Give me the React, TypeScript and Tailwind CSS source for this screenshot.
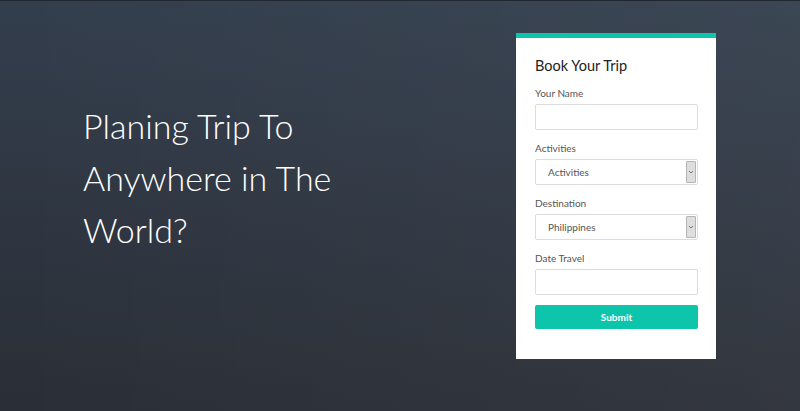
import React from "react";

const fields = [
  { label: "Your Name", type: "text" },
  { label: "Activities", type: "select", value: "Activities" },
  { label: "Destination", type: "select", value: "Philippines" },
  { label: "Date Travel", type: "text" },
];

const SelectBox: React.FC<{ value: string }> = ({ value }) => (
  <div className="flex h-[26px] items-stretch rounded-[2px] border border-[#dcdcdc] bg-white">
    <span className="flex flex-1 items-center pl-3 text-[10px] text-[#555]">{value}</span>
    <span className="m-[1px] flex w-[10px] items-center justify-center rounded-[1px] border border-[#b5b5b5] bg-[#dedede]">
      <svg width="6" height="4" viewBox="0 0 6 4">
        <path d="M1 1l2 2 2-2" fill="none" stroke="#777" strokeWidth="1" />
      </svg>
    </span>
  </div>
);

export default function App() {
  return (
    <div className="flex h-[411px] w-[800px] items-start justify-between border-t border-[#202731] bg-[linear-gradient(to_right,rgba(255,255,255,0)_0%,rgba(255,255,255,0.045)_100%),linear-gradient(to_bottom,#333e4d,#2a2e36)] pl-[83px] pr-[84px] font-['Lato','Liberation_Sans',sans-serif]">
      <h1 className="mt-[99px] text-[34px] font-light leading-[52px] text-white">
        Planing Trip To
        <br />
        Anywhere in The
        <br />
        World?
      </h1>

      <div className="mt-[32px] w-[200px] border-t-[5px] border-[#0cc5ab] bg-white pb-[30px] pl-[19px] pr-[18px] pt-[18px]">
        <h2 className="mb-[10px] text-[14.5px] leading-[20px] text-[#222]">Book Your Trip</h2>
        {fields.map((f) => (
          <div key={f.label} className="mb-[11px]">
            <div className="mb-[4px] text-[10px] leading-[14px] text-[#555]">{f.label}</div>
            {f.type === "select" ? (
              <SelectBox value={f.value ?? ""} />
            ) : (
              <div className="h-[26px] rounded-[2px] border border-[#dcdcdc] bg-white" />
            )}
          </div>
        ))}
        <button
          type="button"
          className="mt-[-1px] block h-[24px] w-full rounded-[2px] bg-[#0cc5ab] text-[10px] font-bold text-white"
        >
          Submit
        </button>
      </div>
    </div>
  );
}
